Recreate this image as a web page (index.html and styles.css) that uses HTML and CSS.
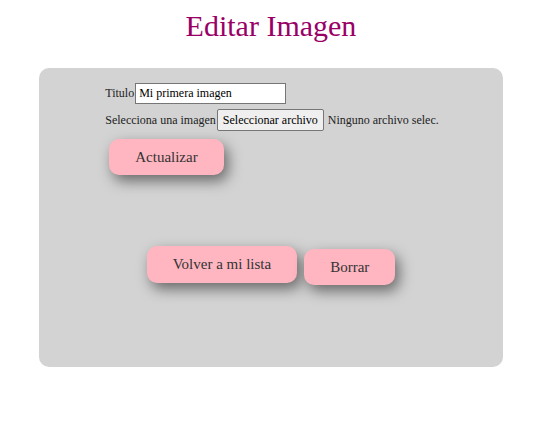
FILE: index.html
```html
<!DOCTYPE html>
<html lang="es">
<head>
<meta charset="utf-8">
<title>Editar Imagen</title>
<link rel="stylesheet" href="styles.css">
</head>
<body>
<div class="page">
  <h1 class="title">Editar Imagen</h1>
  <div class="panel">
    <form class="form">
      <div class="row">
        <label class="label" for="titulo">Titulo</label><input class="text-input" id="titulo" type="text" value="Mi primera imagen">
      </div>
      <div class="row">
        <span class="label">Selecciona una imagen</span><span class="file-btn">Seleccionar archivo</span><span class="file-name">Ninguno archivo selec.</span>
      </div>
      <button type="button" class="btn btn-update">Actualizar</button>
    </form>
    <div class="actions">
      <button type="button" class="btn btn-back">Volver a mi lista</button>
      <button type="button" class="btn btn-delete">Borrar</button>
    </div>
  </div>
</div>
</body>
</html>
```
FILE: styles.css
```css
html, body {
  margin: 0;
  padding: 0;
  background: #ffffff;
}

body {
  font-family: "Liberation Serif", "Times New Roman", serif;
  color: #222;
}

.page {
  width: 464px;
  margin-left: 39px;
  padding-top: 9px;
}

.title {
  margin: 0;
  font-size: 30px;
  font-weight: normal;
  line-height: 33px;
  color: #990066;
  text-align: center;
}

.panel {
  margin-top: 26px;
  height: 299px;
  box-sizing: border-box;
  padding-top: 15px;
  background: #d3d3d3;
  border-radius: 10px;
}

.form {
  width: fit-content;
  margin: 0 auto;
  padding-left: 2px;
  display: flex;
  flex-direction: column;
  align-items: flex-start;
  gap: 5px;
}

.row {
  display: flex;
  align-items: center;
  font-size: 12px;
  color: #222;
}

.label {
  white-space: nowrap;
}

.text-input {
  width: 151px;
  height: 21px;
  box-sizing: border-box;
  margin: 0 0 0 1px;
  padding: 0 3px;
  border: 1px solid #767676;
  background: #fff;
  font-family: "Liberation Serif", "Times New Roman", serif;
  font-size: 12px;
  color: #000;
}

.file-btn {
  height: 22px;
  box-sizing: border-box;
  display: flex;
  align-items: center;
  padding: 0 5px;
  margin-left: 1px;
  border: 1px solid #767676;
  border-radius: 2px;
  background: #efefef;
  color: #000;
  white-space: nowrap;
}

.file-name {
  margin-left: 4px;
  white-space: nowrap;
}

.btn {
  border: none;
  border-radius: 10px;
  background: #ffb6c1;
  color: #333;
  font-family: "Liberation Serif", "Times New Roman", serif;
  font-size: 15px;
  line-height: 17px;
  padding: 9.5px 26px;
  box-shadow: 4px 6px 14px rgba(0, 0, 0, 0.5);
  cursor: pointer;
}

.btn-update {
  margin-top: 3px;
  margin-left: 4px;
}

.actions {
  display: flex;
  justify-content: center;
  align-items: flex-start;
  gap: 7px;
  margin-top: 71px;
}

.btn-back {
  padding-top: 10px;
  padding-bottom: 10px;
}

.btn-delete {
  margin-top: 3px;
}
```
